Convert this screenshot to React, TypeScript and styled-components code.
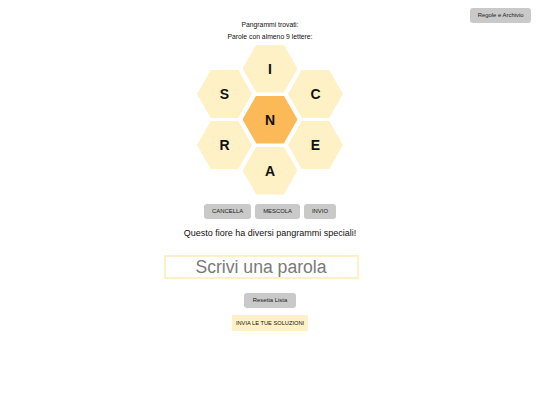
import React from "react";
import styled, { createGlobalStyle } from "styled-components";

const Global = createGlobalStyle`
  html, body { margin: 0; padding: 0; background: #ffffff; }
  body { font-family: "Liberation Sans", Arial, sans-serif; color: #111; }
`;

const Page = styled.div`
  width: 540px;
  min-height: 405px;
  display: flex;
  flex-direction: column;
  align-items: center;
`;

const Header = styled.header`
  width: 100%;
  display: grid;
  grid-template-columns: 1fr auto 1fr;
  align-items: start;
`;

const Info = styled.div`
  grid-column: 2;
  padding-top: 19px;
  display: flex;
  flex-direction: column;
  align-items: center;
`;

const InfoLine = styled.div`
  font-size: 6.8px;
  line-height: 11.5px;
  color: #111;
  white-space: nowrap;
`;

const TopRight = styled.div`
  grid-column: 3;
  display: flex;
  justify-content: flex-end;
  padding: 8px 9px 0 0;
`;

const GrayButton = styled.button<{ $w?: number }>`
  height: 15px;
  padding: 0 ${(p) => (p.$w ?? 8)}px;
  border: none;
  border-radius: 3px;
  background: #c9c9c9;
  color: #1a1a1a;
  font-family: "Liberation Sans", Arial, sans-serif;
  font-size: 5.9px;
  line-height: 15px;
  white-space: nowrap;
  cursor: pointer;
`;

const Hive = styled.div`
  position: relative;
  width: 146px;
  height: 152px;
  margin-top: 2px;
`;

const Cell = styled.div<{ $center?: boolean }>`
  position: absolute;
  width: 55px;
  height: 48px;
  margin-left: -27.5px;
  margin-top: -24px;
  clip-path: polygon(25% 0, 75% 0, 100% 50%, 75% 100%, 25% 100%, 0 50%);
  background: ${(p) => (p.$center ? "#fbb957" : "#fef1c6")};
  display: flex;
  align-items: center;
  justify-content: center;
  font-size: 14px;
  font-weight: 700;
  color: #111;
`;

const ActionRow = styled.div`
  display: flex;
  gap: 4px;
  margin-top: 8px;
`;

const Message = styled.p`
  margin: 8px 0 0;
  font-size: 9px;
  line-height: 12px;
  color: #111;
`;

const WordInput = styled.input`
  box-sizing: border-box;
  width: 195px;
  height: 24px;
  margin: 16px 18px 0 0;
  border: 2px solid #fdf0c8;
  outline: none;
  padding: 0;
  text-align: center;
  font-family: "Liberation Sans", Arial, sans-serif;
  font-size: 17.6px;
  color: #333;
  background: #fff;
  &::placeholder { color: #7a7a7a; }
`;

const ResetButton = styled(GrayButton)`
  margin-top: 14px;
`;

const SubmitButton = styled.button`
  margin-top: 7px;
  height: 16px;
  padding: 0 4px;
  border: none;
  border-radius: 0;
  background: #fef1c6;
  color: #111;
  font-family: "Liberation Sans", Arial, sans-serif;
  font-size: 5.7px;
  line-height: 16px;
  white-space: nowrap;
`;

const cells: { l: string; x: number; y: number; c?: boolean }[] = [
  { l: "I", x: 0, y: -51 },
  { l: "S", x: -45.5, y: -25.5 },
  { l: "C", x: 45.5, y: -25.5 },
  { l: "N", x: 0, y: 0, c: true },
  { l: "R", x: -45.5, y: 25.5 },
  { l: "E", x: 45.5, y: 25.5 },
  { l: "A", x: 0, y: 51 },
];

export default function App() {
  return (
    <>
      <Global />
      <Page>
        <Header>
          <Info>
            <InfoLine>Pangrammi trovati:</InfoLine>
            <InfoLine>Parole con almeno 9 lettere:</InfoLine>
          </Info>
          <TopRight>
            <GrayButton $w={7.5}>Regole e Archivio</GrayButton>
          </TopRight>
        </Header>
        <Hive>
          {cells.map((c) => (
            <Cell
              key={c.l}
              $center={c.c}
              style={{ left: 73 + c.x, top: 75.5 + c.y }}
            >
              {c.l}
            </Cell>
          ))}
        </Hive>
        <ActionRow>
          <GrayButton>CANCELLA</GrayButton>
          <GrayButton>MESCOLA</GrayButton>
          <GrayButton>INVIO</GrayButton>
        </ActionRow>
        <Message>Questo fiore ha diversi pangrammi speciali!</Message>
        <WordInput placeholder="Scrivi una parola" />
        <ResetButton $w={8.5}>Resetta Lista</ResetButton>
        <SubmitButton>INVIA LE TUE SOLUZIONI</SubmitButton>
      </Page>
    </>
  );
}
